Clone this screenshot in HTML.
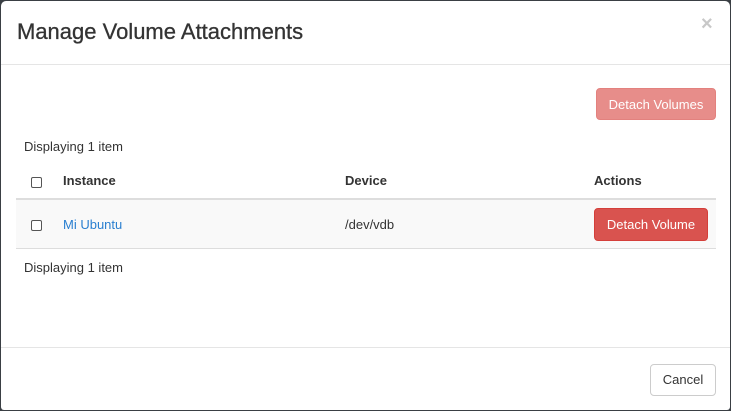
<!DOCTYPE html><html><head><style>
body{margin:0;width:731px;height:411px;background:#3a3f44;font-family:"Liberation Sans",sans-serif;font-size:13px;color:#333;overflow:hidden;position:relative}
.m{position:absolute;left:1px;top:1px;width:729px;height:409px;background:#fff;border-radius:5px 5px 3px 3px}
.a{position:absolute}
.btn{position:absolute;border-radius:4px;color:#fff;font-size:13px;text-align:center;box-sizing:border-box}
.cb{position:absolute;width:9px;height:9px;border:1px solid #555;border-radius:2px;background:#fff}
</style></head><body><div class="m">
<div class="a" style="left:16px;top:18px;font-size:22px;color:#333;-webkit-text-stroke:0.3px #333">Manage Volume Attachments</div>
<div class="a" style="left:700px;top:12px;font-size:20px;font-weight:bold;color:#c8c8c8">×</div>
<div class="a" style="left:0;top:63px;width:729px;height:1px;background:#e5e5e5"></div>
<div class="btn" style="left:595px;top:87px;width:120px;height:32px;line-height:31px;background:#e78d8a;border:1px solid #e3817e">Detach Volumes</div>
<div class="a" style="left:23px;top:138px">Displaying 1 item</div>
<div class="cb" style="left:30px;top:176px"></div>
<div class="a" style="left:62px;top:172px;font-weight:bold">Instance</div>
<div class="a" style="left:344px;top:172px;font-weight:bold">Device</div>
<div class="a" style="left:593px;top:172px;font-weight:bold">Actions</div>
<div class="a" style="left:15px;top:197px;width:700px;height:2px;background:#ddd"></div>
<div class="a" style="left:15px;top:199px;width:700px;height:48px;background:#f9f9f9;border-bottom:1px solid #ddd"></div>
<div class="cb" style="left:30px;top:219px"></div>
<div class="a" style="left:62px;top:216px;color:#2a7fd0">Mi Ubuntu</div>
<div class="a" style="left:344px;top:216px">/dev/vdb</div>
<div class="btn" style="left:593px;top:207px;width:114px;height:33px;line-height:31px;background:#d9534f;border:1px solid #d43f3a">Detach Volume</div>
<div class="a" style="left:23px;top:259px">Displaying 1 item</div>
<div class="a" style="left:0;top:346px;width:729px;height:1px;background:#e5e5e5"></div>
<div class="btn" style="left:649px;top:363px;width:66px;height:32px;line-height:30px;border:1px solid #ccc;color:#333;background:#fff">Cancel</div>
</div></body></html>
